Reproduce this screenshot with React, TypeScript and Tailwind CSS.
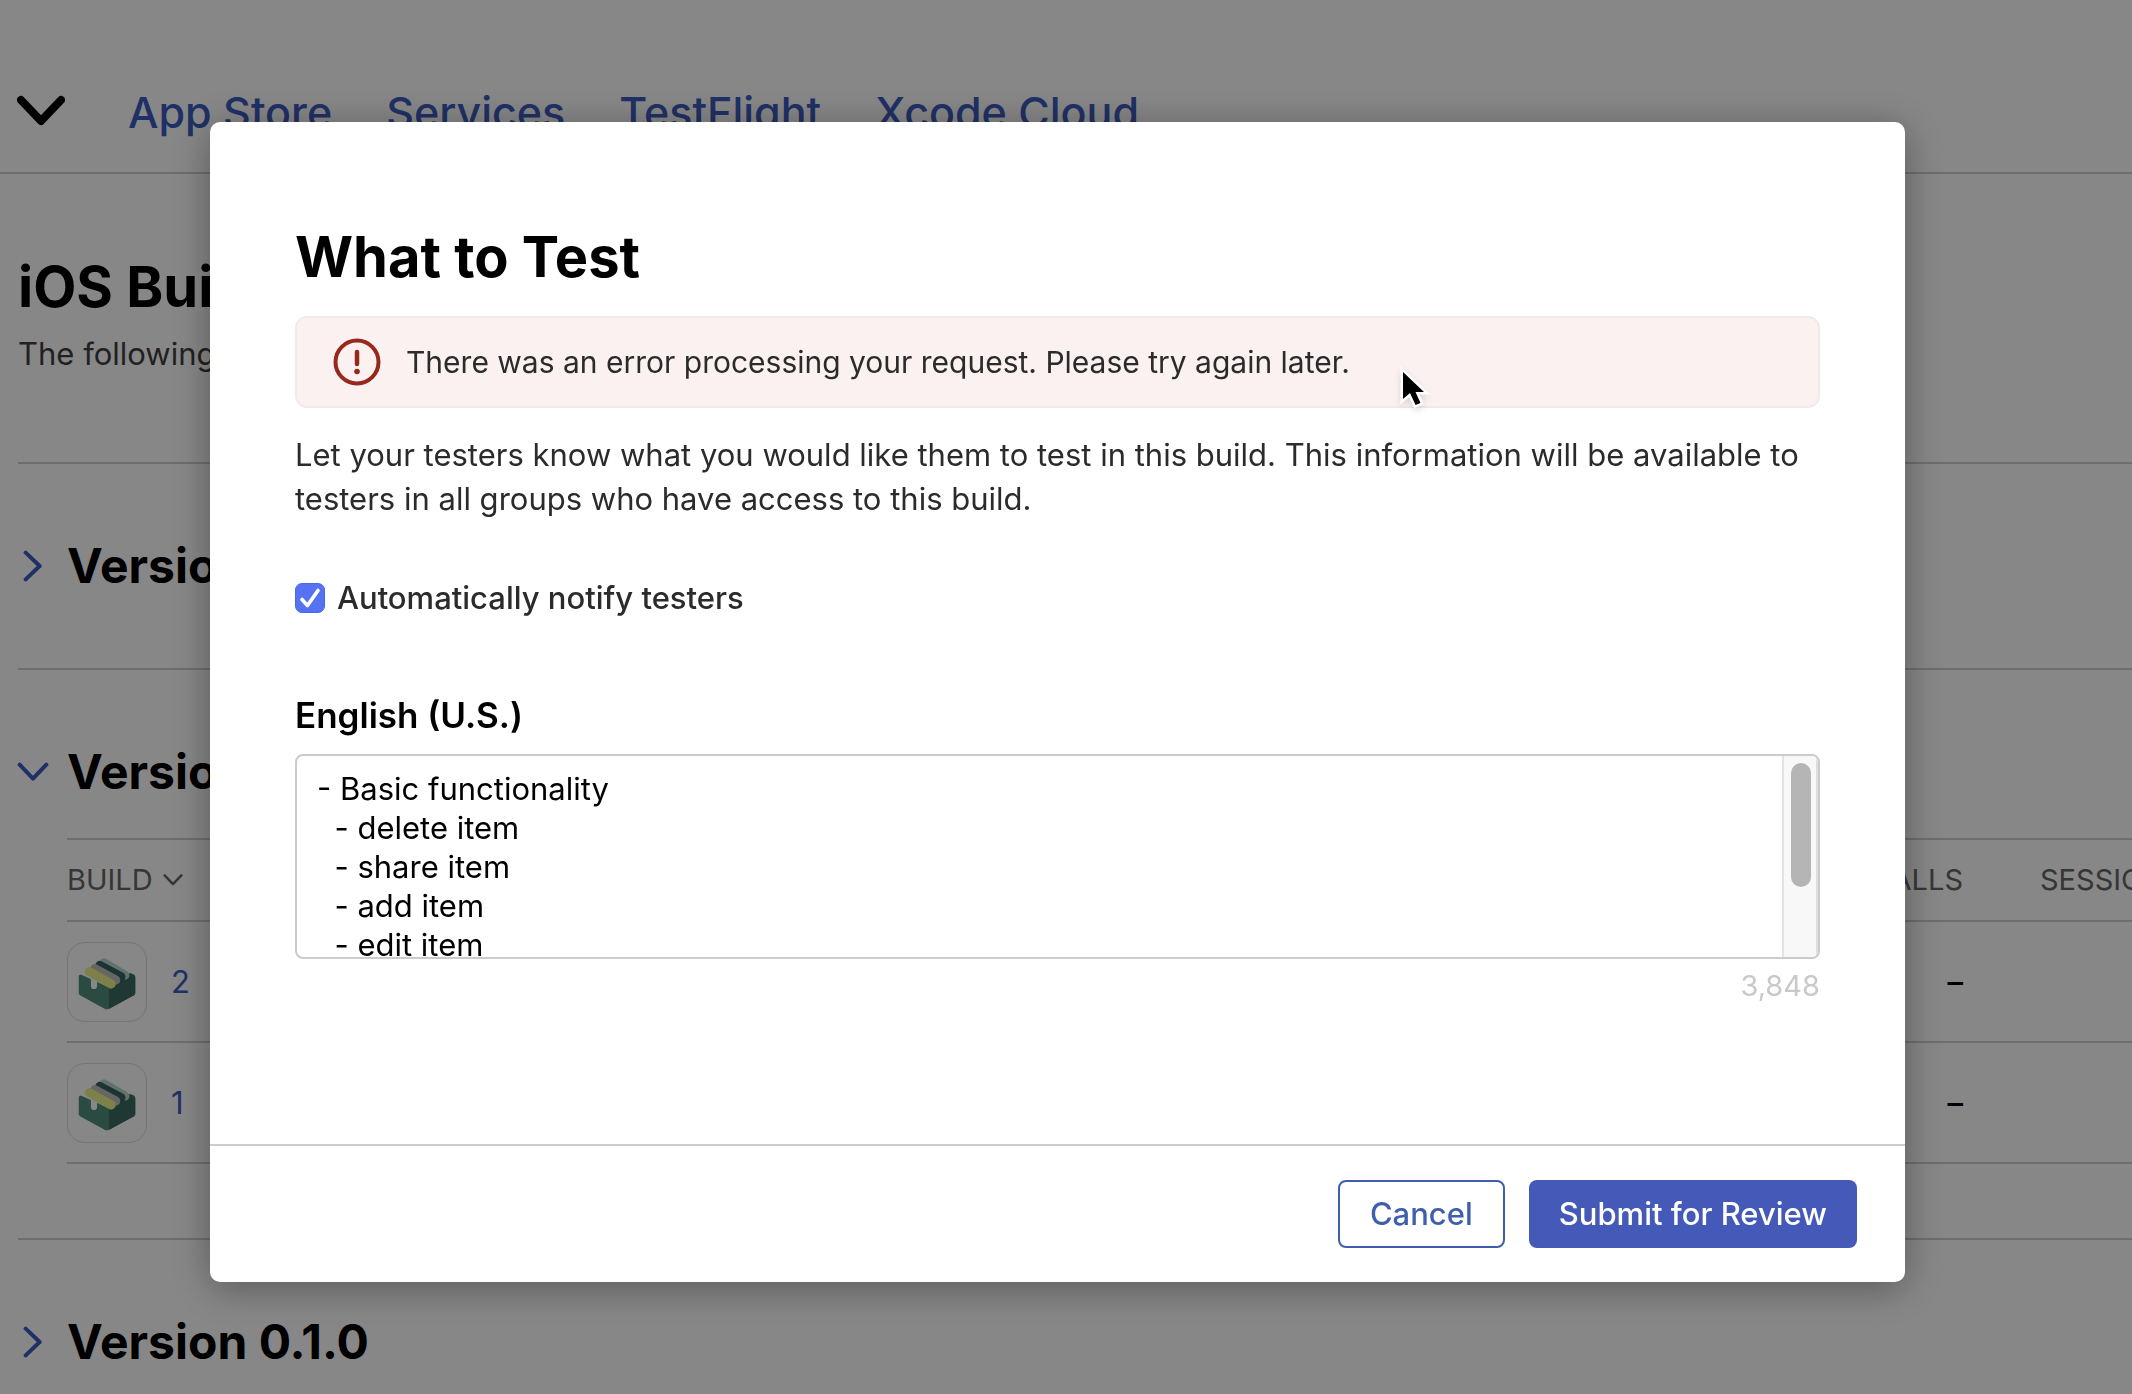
import { useState } from "react";

function Chevron({ className, down, width = 2 }: { className: string; down?: boolean; width?: number }) {
  return (
    <svg
      viewBox="0 0 24 24"
      className={className}
      fill="none"
      stroke="currentColor"
      strokeWidth={width}
      strokeLinecap="round"
      strokeLinejoin="round"
      aria-hidden="true"
    >
      <path d={down ? "M2 6.5 12 17 22 6.5" : "M6.5 2 17 12 6.5 22"} />
    </svg>
  );
}

function AppIcon() {
  return (
    <div className="size-20 overflow-hidden rounded-[18px] border border-[#dcdcdc]">
      <svg viewBox="0 0 240 240" className="size-full" aria-hidden="true">
        <path
          d="M33 104q0-8 8-6l88 40 63-45q15 2 15 13v48q0 4-4 7l-79 42q-5 3-10 0l-77-42q-4-3-4-7z"
          fill="#4f8f7b"
        />
        <path d="M126 138 185 92q22 4 22 14v48q0 4-4 7l-77 42z" fill="#3c6b61" />
        <g fill="none" strokeWidth="28" strokeLinecap="round">
          <path d="M111 61 175 99" stroke="#b4d8cc" />
          <path d="M98 69 163 104" stroke="#3a6064" />
          <path d="M83 79 147 114" stroke="#c4c0ba" />
          <path d="M80 112v20" stroke="#ffffff" strokeWidth="19" />
          <path d="M66 88 133 126" stroke="#eef28c" />
        </g>
      </svg>
    </div>
  );
}

function VersionHeading({ name, open }: { name: string; open?: boolean }) {
  return (
    <h2 className="text-[48px] leading-[56px] font-bold">
      <button type="button" className="flex items-center gap-5 pl-px text-left">
        <span className="flex w-7 justify-center text-[#3c5cc0]">
          <Chevron className="size-8 shrink-0" down={open} width={3} />
        </span>
        {name}
      </button>
    </h2>
  );
}

function Page() {
  return (
    <div className="bg-white text-black">
      <header className="flex h-[174px] items-center border-b-2 border-[#cfcfcf] pt-[50px] pl-[17px]">
        <button type="button" aria-label="Choose app" className="mr-[63px] text-black">
          <Chevron className="size-12" down width={4} />
        </button>
        <nav className="flex gap-[54px] pt-[2px] text-[43px] leading-[56px] font-medium whitespace-nowrap text-[#3c5cc0]">
          <a href="#store">App Store</a>
          <a href="#services">Services</a>
          <a href="#testflight">TestFlight</a>
          <a href="#cloud">Xcode Cloud</a>
        </nav>
      </header>
      <main className="pl-[18px]">
        <div className="h-[290px] border-b-2 border-[#cfcfcf] pt-[78px]">
          <h1 className="text-[56px] leading-[70px] font-bold">iOS Builds</h1>
          <p className="pt-[10px] text-[31px] leading-[44px] text-[#3f3f3f]">
            The following builds are available to test.
          </p>
        </div>
        <section className="flex h-[206px] items-center border-b-2 border-[#cfcfcf]">
          <VersionHeading name="Version 0.3.0" />
        </section>
        <section className="border-b-2 border-[#cfcfcf] pb-[74px]">
          <div className="flex h-[168px] items-center pt-[36px]">
            <VersionHeading name="Version 0.2.0" open />
          </div>
          <div className="pl-[49px]">
            <table className="w-full table-fixed border-t-2 border-[#cfcfcf] text-left">
              <thead>
                <tr className="h-[82px] border-b-2 border-[#cfcfcf] text-[29px] leading-9 text-[#666666]">
                  <th className="font-normal">
                    <span className="flex items-center gap-[10px]">
                      BUILD <Chevron className="size-5" down width={3} />
                    </span>
                  </th>
                  <th className="text-right font-normal">INSTALLS</th>
                  <th className="w-[169px] pl-[77px] font-normal">SESSIONS</th>
                </tr>
              </thead>
              <tbody className="text-[31px] leading-10">
                {["2", "1"].map((n) => (
                  <tr key={n} className="h-[121px] border-b-2 border-[#cfcfcf]">
                    <td>
                      <div className="flex items-center gap-6">
                        <AppIcon />
                        <a href={`#build-${n}`} className="text-[#3c5cc0]">
                          {n}
                        </a>
                      </div>
                    </td>
                    <td className="text-right font-medium">–</td>
                    <td />
                  </tr>
                ))}
              </tbody>
            </table>
          </div>
        </section>
        <section className="flex h-[204px] items-center">
          <VersionHeading name="Version 0.1.0" />
        </section>
      </main>
    </div>
  );
}

const notes = `- Basic functionality
  - delete item
  - share item
  - add item
  - edit item
  - search items
  - sort items
  - archive item`;

function Dialog() {
  const [notify, setNotify] = useState(true);
  return (
    <div
      role="dialog"
      aria-labelledby="dialog-title"
      className="w-full max-w-[1695px] rounded-[10px] bg-white text-[31px] leading-[44px] text-[#2b2b2b] shadow-[0_6px_40px_rgba(0,0,0,0.35)]"
    >
      <div className="px-[85px] pt-[100px] pb-[136px]">
        <h2 id="dialog-title" className="text-[56px] leading-[70px] font-bold text-black">
          What to Test
        </h2>
        <div
          role="alert"
          className="relative mt-6 flex h-[92px] items-center gap-[25px] rounded-[12px] border-2 border-[#f5e8e8] bg-[#faf1f0] pl-9 text-[30px]"
        >
          <svg viewBox="0 0 48 48" className="size-12 shrink-0" fill="none" aria-hidden="true">
            <circle cx="24" cy="24" r="21.5" stroke="#97291c" strokeWidth="4" />
            <path d="M24 14v12" stroke="#97291c" strokeWidth="4.5" strokeLinecap="round" />
            <circle cx="24" cy="33.5" r="2.8" fill="#97291c" />
          </svg>
          <span>There was an error processing your request. Please try again later.</span>
          <svg
            viewBox="0 0 32 46"
            className="absolute top-12 left-[1103px] h-[46px] w-8 drop-shadow-md"
            aria-hidden="true"
          >
            <path
              d="M3 6v27l7-6 5.5 12 5-2-5-11h8.5z"
              fill="#000"
              stroke="#fff"
              strokeWidth="5"
              style={{ paintOrder: "stroke" }}
            />
          </svg>
        </div>
        <p className="mt-[25px]">
          Let your testers know what you would like them to test in this build. This information will be available to
          testers in all groups who have access to this build.
        </p>
        <label className="mt-[55px] flex items-center gap-3 font-medium">
          <span className="relative size-[30px]">
            <input
              type="checkbox"
              checked={notify}
              onChange={(e) => setNotify(e.target.checked)}
              className="block size-[30px] appearance-none rounded-[7px] border border-[#4a68e8] checked:bg-[#5672f2]"
            />
            {notify && (
              <svg viewBox="0 0 30 30" className="pointer-events-none absolute inset-0 size-[30px]" aria-hidden="true">
                <path
                  d="M7 16.5 12.5 22.5 23 7.5"
                  fill="none"
                  stroke="#fff"
                  strokeWidth="3.6"
                  strokeLinecap="round"
                  strokeLinejoin="round"
                />
              </svg>
            )}
          </span>
          Automatically notify testers
        </label>
        <label htmlFor="notes" className="mt-[73px] block text-[35px] font-semibold text-black">
          English (U.S.)
        </label>
        <div className="mt-[17px] flex h-[205px] overflow-hidden rounded-lg border-2 border-[#cbcbcb]">
          <textarea
            id="notes"
            defaultValue={notes}
            className="min-w-0 flex-1 resize-none overflow-hidden pt-[13px] pl-5 leading-[39px] text-black outline-none"
          />
          <div className="w-[36px] border-r-2 border-l-2 border-r-[#dddddd] border-l-[#e4e4e4] bg-[#f8f8f8] py-[7px] pl-[7px]">
            <div className="h-[124px] w-5 rounded-full bg-[#b5b5b5]" />
          </div>
        </div>
        <p className="mt-[5px] text-right text-[29px] text-[#c9c9c9]">3,848</p>
      </div>
      <footer className="flex justify-end gap-6 border-t-2 border-[#cdcdcd] py-[34px] pr-12">
        <button type="button" className="h-[68px] rounded-lg border-2 border-[#3f5fae] px-[30px] font-medium text-[#3f5fae]">
          Cancel
        </button>
        <button type="button" className="h-[68px] rounded-lg bg-[#4459b8] px-[30px] font-medium text-white">
          Submit for Review
        </button>
      </footer>
    </div>
  );
}

export default function App() {
  return (
    <div className="relative h-screen overflow-hidden font-['Inter','Liberation_Sans',sans-serif]">
      <Page />
      <div className="fixed inset-0 flex items-start justify-center bg-black/47 pt-[122px] pr-[17px]">
        <Dialog />
      </div>
    </div>
  );
}
